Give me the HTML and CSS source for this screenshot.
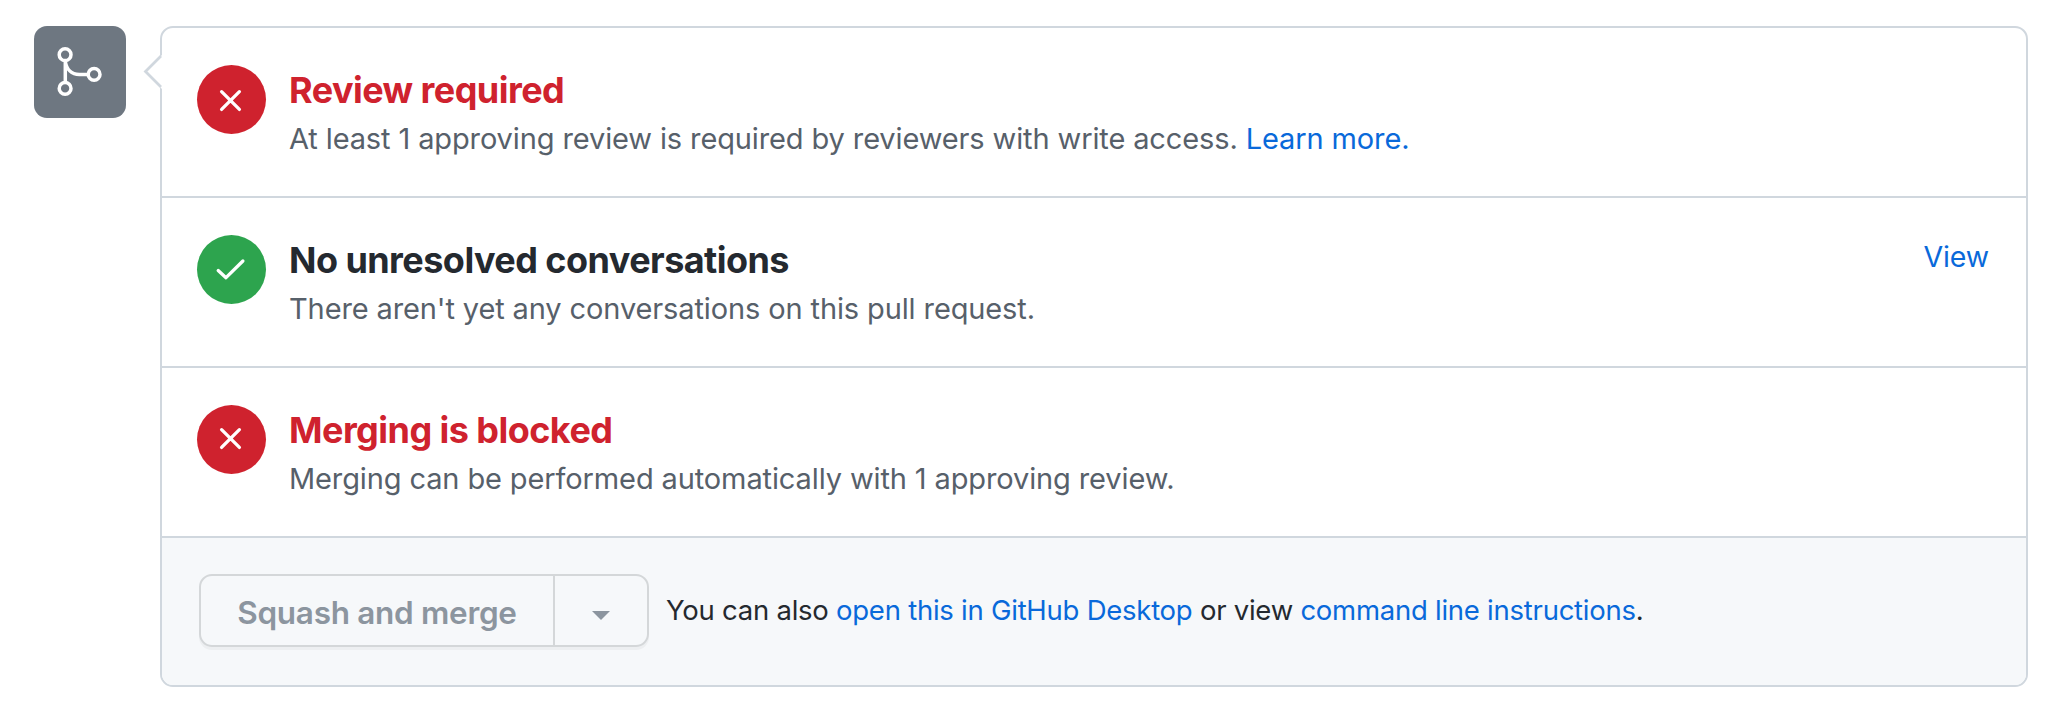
FILE: index.html
```html
<!DOCTYPE html>
<html lang="en">
<head>
<meta charset="utf-8">
<title>Merge status</title>
<link rel="stylesheet" href="styles.css">
</head>
<body>
<main class="merge">
  <div class="badge">
    <svg class="badge-icon" viewBox="0 0 92 92" fill="none" stroke="currentColor" stroke-width="3.5">
      <circle cx="31.1" cy="28.7" r="5.9"/>
      <circle cx="31.1" cy="62.4" r="5.9"/>
      <circle cx="60.1" cy="48.4" r="5.9"/>
      <path d="M31.3 34.5v22M31.3 35.5c1.2 8 6.500 12.900 14 12.900h9"/>
    </svg>
  </div>
  <section class="box">
    <svg class="pointer" viewBox="0 0 18 34"><path class="pointer-fill" d="M18 0 1 17 18 34z"/><path class="pointer-line" d="M17 1 1.500 16.500 17 32"/></svg>
    <div class="row">
      <span class="status status-fail"><svg class="status-icon" viewBox="0 0 69 69"><path d="M24.600 26.700 42.400 44.400M42.400 26.700 24.600 44.400"/></svg></span>
      <div class="copy">
        <h3 class="title title-fail">Review required</h3>
        <p class="note">At least 1 approving review is required by reviewers with write access. <a class="link">Learn more.</a></p>
      </div>
    </div>
    <div class="row">
      <span class="status status-pass"><svg class="status-icon" viewBox="0 0 69 69"><path d="M21.200 35.500 29 42.700 45.900 26"/></svg></span>
      <div class="copy">
        <h3 class="title">No unresolved conversations</h3>
        <p class="note">There aren't yet any conversations on this pull request.</p>
      </div>
      <a class="link view">View</a>
    </div>
    <div class="row">
      <span class="status status-fail"><svg class="status-icon" viewBox="0 0 69 69"><path d="M24.600 24.700 42.400 42.400M42.400 24.700 24.600 42.400"/></svg></span>
      <div class="copy">
        <h3 class="title title-fail">Merging is blocked</h3>
        <p class="note">Merging can be performed automatically with 1 approving review.</p>
      </div>
    </div>
    <footer class="footer">
      <div class="button-group">
        <button class="merge-button" disabled>Squash and merge</button>
        <button class="menu-button" disabled aria-label="Select merge method"><span class="caret"></span></button>
      </div>
      <p class="hint">You can also <a class="link">open this in GitHub Desktop</a> or view <a class="link">command line instructions</a>.</p>
    </footer>
  </section>
</main>
</body>
</html>
```
FILE: styles.css
```css
* { box-sizing: border-box; }
body {
  margin: 0;
  background: #fff;
  color: #24292f;
  font-family: Inter, "Liberation Sans", sans-serif;
  font-size: 29px;
  letter-spacing: -0.12px;
}
.merge {
  display: flex;
  align-items: flex-start;
  gap: 34px;
  padding: 26px 44px 0 34px;
}
.badge {
  flex: none;
  width: 92px;
  height: 92px;
  border-radius: 13px;
  background: #6e7781;
  color: #fff;
}
.badge-icon { display: block; width: 92px; height: 92px; }
.box {
  position: relative;
  flex: 1;
  border: 2px solid #d0d7de;
  border-radius: 13px;
}
.pointer {
  position: absolute;
  left: -18px;
  top: 27px;
  width: 18px;
  height: 34px;
  overflow: visible;
}
.pointer-fill { fill: #fff; }
.pointer-line { fill: none; stroke: #d0d7de; stroke-width: 2.8; }
.row {
  display: flex;
  align-items: flex-start;
  height: 170px;
  padding: 37px 37px 0 35px;
  border-bottom: 2px solid #d0d7de;
}
.status {
  flex: none;
  width: 69px;
  height: 69px;
  margin-right: 23px;
  border-radius: 50%;
}
.status-fail { background: #cf222e; }
.status-pass { background: #2da44e; }
.status-icon {
  display: block;
  fill: none;
  stroke: #fff;
  stroke-width: 3.3;
  stroke-linecap: round;
  stroke-linejoin: round;
}
.copy { flex: 1; padding-top: 1px; white-space: nowrap; }
.title {
  margin: 0 0 2px;
  font-size: 36px;
  line-height: 48px;
  font-weight: 650;
  letter-spacing: -0.55px;
}
.title-fail { color: #cf222e; }
.note {
  margin: 0;
  line-height: 46px;
  color: #57606a;
}
.link { color: #0969da; text-decoration: none; }
.view { line-height: 46px; margin-top: -1px; font-size: 28.5px; }
.footer {
  display: flex;
  align-items: flex-start;
  height: 147px;
  padding: 36px 37px 0;
  border-radius: 0 0 11px 11px;
  background: #f6f8fa;
}
.button-group {
  display: flex;
  width: 450px;
  height: 73px;
  border: 2px solid #d4d7d9;
  border-radius: 13px;
  box-shadow: 0 3px 0 #edeff1;
}
.merge-button, .menu-button {
  margin: 0;
  padding: 0;
  border: 0;
  background: none;
  font: inherit;
}
.merge-button {
  width: 354px;
  padding-top: 3px;
  border-right: 2px solid #d4d7d9;
  color: #8c959f;
  font-size: 31.5px;
  font-weight: 600;
  letter-spacing: -0.3px;
  white-space: nowrap;
}
.menu-button {
  display: flex;
  flex: 1;
  align-items: center;
  justify-content: center;
}
.caret {
  margin-top: 9px;
  border: 9px solid transparent;
  border-top-color: #8c959f;
  border-bottom: 0;
}
.hint {
  margin: 0 0 0 17px;
  padding-top: 13px;
  font-size: 27.5px;
  line-height: 46px;
  letter-spacing: -0.25px;
  white-space: nowrap;
}
```
